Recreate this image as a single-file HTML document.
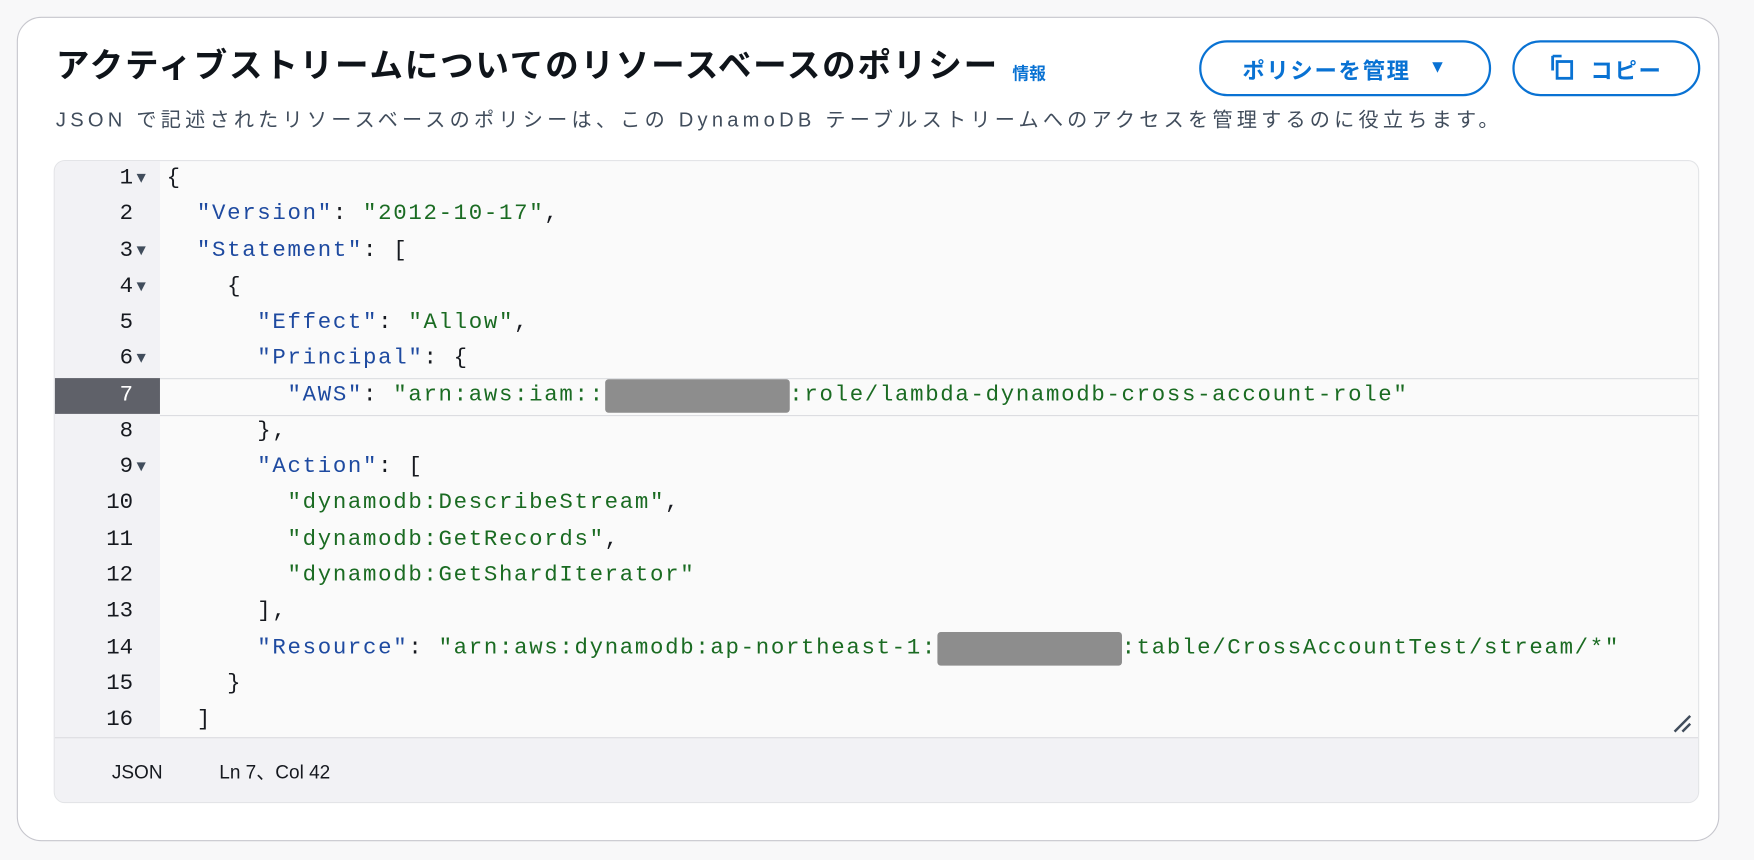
<!DOCTYPE html>
<html><head><meta charset="utf-8"><style>
html,body{margin:0;padding:0;background:#f8f8f9;width:1754px;height:860px;overflow:hidden}
#w{width:1568px;height:769px;position:relative;transform:scale(1.11862);transform-origin:0 0;font-family:"Liberation Sans","Noto Sans CJK JP",sans-serif}
.card{position:absolute;left:15px;top:15px;width:1520px;height:735px;background:#fff;border:1px solid #c6c6cd;border-radius:22px}
.title{position:absolute;left:50px;top:41px;font-size:30px;letter-spacing:1.6px;line-height:38px;font-weight:bold;color:#0f141a;white-space:nowrap}
.info{position:absolute;left:905px;top:55px;font-size:15px;font-weight:bold;color:#0972d3}
.btn{position:absolute;top:36px;border:2px solid #0972d3;border-radius:26px;color:#0972d3;font-weight:bold;font-size:20px;letter-spacing:1.5px;display:flex;align-items:center;justify-content:center;box-sizing:border-box;height:50px}
.desc{position:absolute;left:50px;top:94px;font-size:18px;letter-spacing:3.78px;color:#414d5c;white-space:nowrap;line-height:26px}
.ed{position:absolute;left:48px;top:143px;width:1471px;height:575px;border:1px solid #e3e4e7;border-radius:10px;background:#fafafa;overflow:hidden;box-sizing:border-box}
.gut{position:absolute;left:0;top:0;width:94px;height:516px;background:#f2f2f5}
.ln{position:absolute;left:0;width:94px;height:32.27px;font-family:"Liberation Mono","DejaVu Sans Mono",monospace;font-size:20px;line-height:32px;color:#16191f}
.ln span.n{position:absolute;right:24px}
.ln span.f{position:absolute;left:73px;top:0px;font-size:14px;color:#414d5c}
.code{position:absolute;left:100px;font-family:"Liberation Mono","DejaVu Sans Mono",monospace;font-size:20px;letter-spacing:1.5px;line-height:32px;white-space:pre;color:#16191f;height:32.27px}
.k{color:#1e4aa0}.s{color:#1a6b22}
.red{display:inline-block;background:#8d8d8d;border-radius:3px;height:30px;vertical-align:top;margin-top:1px}
.status{position:absolute;left:0;top:515px;width:100%;height:60px;background:#f2f2f5;border-top:1px solid #dcdde1;font-size:17px;color:#16191f}
.status span{position:absolute;top:20px;line-height:22px}
</style></head><body><div id="w">
<div class="card"></div>
<div class="title">アクティブストリームについてのリソースベースのポリシー</div>
<div class="info">情報</div>
<div class="btn" style="left:1072px;width:261px">ポリシーを管理<span style="margin-left:16px;font-size:16px">▼</span></div>
<div class="btn" style="left:1352px;width:168px"><svg width="22" height="24" viewBox="0 0 22 24" style="margin-right:14px"><path d="M2 1 H10 M2 1 V14" stroke="#0972d3" stroke-width="2.5" fill="none"/><rect x="6" y="6" width="13" height="15" stroke="#0972d3" stroke-width="2.5" fill="none"/></svg>コピー</div>
<div class="desc">JSON で記述されたリソースベースのポリシーは、この DynamoDB テーブルストリームへのアクセスを管理するのに役立ちます。</div>
<div class="ed">
<div class="gut"></div>
<div style="position:absolute;left:94px;right:0;top:194px;height:32px;border-top:1px solid #dcdde1;border-bottom:1px solid #dcdde1"></div>
<div class="ln" style="top:0"><span class="n">1</span><span class="f">▼</span></div>
<div class="ln" style="top:32.27px"><span class="n">2</span></div>
<div class="ln" style="top:64.54px"><span class="n">3</span><span class="f">▼</span></div>
<div class="ln" style="top:96.81px"><span class="n">4</span><span class="f">▼</span></div>
<div class="ln" style="top:129.08px"><span class="n">5</span></div>
<div class="ln" style="top:161.35px"><span class="n">6</span><span class="f">▼</span></div>
<div class="ln" style="top:193.62px;background:#5f6169;color:#fff"><span class="n">7</span></div>
<div class="ln" style="top:225.89px"><span class="n">8</span></div>
<div class="ln" style="top:258.16px"><span class="n">9</span><span class="f">▼</span></div>
<div class="ln" style="top:290.43px"><span class="n">10</span></div>
<div class="ln" style="top:322.7px"><span class="n">11</span></div>
<div class="ln" style="top:354.97px"><span class="n">12</span></div>
<div class="ln" style="top:387.24px"><span class="n">13</span></div>
<div class="ln" style="top:419.51px"><span class="n">14</span></div>
<div class="ln" style="top:451.78px"><span class="n">15</span></div>
<div class="ln" style="top:484.05px"><span class="n">16</span></div>
<div class="code" style="top:0">{</div>
<div class="code" style="top:32.27px">  <span class="k">"Version"</span>: <span class="s">"2012-10-17"</span>,</div>
<div class="code" style="top:64.54px">  <span class="k">"Statement"</span>: [</div>
<div class="code" style="top:96.81px">    {</div>
<div class="code" style="top:129.08px">      <span class="k">"Effect"</span>: <span class="s">"Allow"</span>,</div>
<div class="code" style="top:161.35px">      <span class="k">"Principal"</span>: {</div>
<div class="code" style="top:193.62px">        <span class="k">"AWS"</span>: <span class="s">"arn:aws:iam::<span class="red" style="width:165px"></span>:role/lambda-dynamodb-cross-account-role"</span></div>
<div class="code" style="top:225.89px">      },</div>
<div class="code" style="top:258.16px">      <span class="k">"Action"</span>: [</div>
<div class="code" style="top:290.43px">        <span class="s">"dynamodb:DescribeStream"</span>,</div>
<div class="code" style="top:322.7px">        <span class="s">"dynamodb:GetRecords"</span>,</div>
<div class="code" style="top:354.97px">        <span class="s">"dynamodb:GetShardIterator"</span></div>
<div class="code" style="top:387.24px">      ],</div>
<div class="code" style="top:419.51px">      <span class="k">"Resource"</span>: <span class="s">"arn:aws:dynamodb:ap-northeast-1:<span class="red" style="width:165px"></span>:table/CrossAccountTest/stream/*"</span></div>
<div class="code" style="top:451.78px">    }</div>
<div class="code" style="top:484.05px">  ]</div>
<svg style="position:absolute;left:1446px;top:494px" width="18" height="18" viewBox="0 0 18 18"><path d="M2 16 L16 2 M9 16 L16 9" stroke="#414d5c" stroke-width="2.2"/></svg>
<div class="status"><span style="left:51px">JSON</span><span style="left:147px">Ln 7、Col 42</span></div>
</div>
</div></body></html>
